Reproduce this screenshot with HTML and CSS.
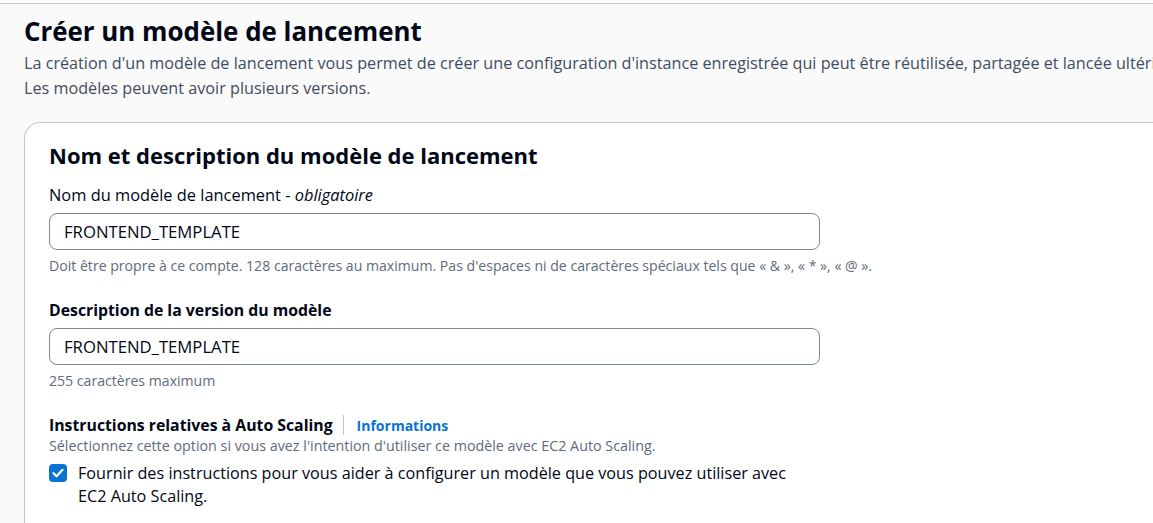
FILE: index.html
```html
<!DOCTYPE html>
<html lang="fr">
<head>
<meta charset="utf-8">
<link rel="stylesheet" href="styles.css">
</head>
<body>
<div class="page">
  <header class="page-header">
    <h1 class="title">Créer un modèle de lancement</h1>
    <p class="intro">La création d'un modèle de lancement vous permet de créer une configuration d'instance enregistrée qui peut être réutilisée, partagée et lancée ultérieurement.<br>Les modèles peuvent avoir plusieurs versions.</p>
  </header>
  <section class="container">
    <h2 class="section-title">Nom et description du modèle de lancement</h2>
    <div class="field field-name">
      <label class="label">Nom du modèle de lancement - <i>obligatoire</i></label>
      <div class="input">FRONTEND_TEMPLATE</div>
      <div class="hint">Doit être propre à ce compte. 128 caractères au maximum. Pas d'espaces ni de caractères spéciaux tels que « &amp; », « * », « @ ».</div>
    </div>
    <div class="field field-gap">
      <label class="label bold">Description de la version du modèle</label>
      <div class="input">FRONTEND_TEMPLATE</div>
      <div class="hint">255 caractères maximum</div>
    </div>
    <div class="field field-gap">
      <div class="label-row">
        <span class="label bold">Instructions relatives à Auto Scaling</span>
        <span class="sep"></span>
        <a class="info">Informations</a>
      </div>
      <div class="hint desc">Sélectionnez cette option si vous avez l'intention d'utiliser ce modèle avec EC2 Auto Scaling.</div>
      <div class="check-row">
        <span class="checkbox"><svg viewBox="0 0 18 18" width="18" height="18"><path d="M4.5 9.2 L7.6 12.2 L13.5 5.8" fill="none" stroke="#fff" stroke-width="2.2" stroke-linecap="round" stroke-linejoin="round"/></svg></span>
        <span class="check-text">Fournir des instructions pour vous aider à configurer un modèle que vous pouvez utiliser avec<br>EC2 Auto Scaling.</span>
      </div>
    </div>
  </section>
</div>
</body>
</html>
```
FILE: styles.css
```css
html, body {
  margin: 0;
  padding: 0;
}
body {
  background: #ffffff;
  font-family: "Open Sans", "Noto Sans", Arial, sans-serif;
  color: #000716;
  overflow: hidden;
  width: 1153px;
  height: 523px;
}
.page {
  margin-top: 3px;
  border-top: 1px solid #c6c6cd;
  background: #fafafa;
  padding: 0 0 0 24px;
  height: 519px;
  white-space: nowrap;
  overflow: hidden;
}
.page-header {
  padding-top: 9px;
}
.title {
  margin: 0;
  font-size: 25.9px;
  line-height: 36px;
  font-weight: 700;
  color: #000716;
}
.intro {
  margin: 2px 0 0;
  font-size: 16.2px;
  line-height: 25px;
  color: #414d5c;
}
.container {
  margin-top: 21px;
  background: #ffffff;
  border: 1px solid #c6c6cd;
  border-right: none;
  border-radius: 16px 0 0 0;
  padding: 17px 0 0 24px;
  height: 400px;
}
.section-title {
  margin: 0;
  font-size: 22px;
  line-height: 30px;
  font-weight: 700;
  color: #000716;
}
.field {
  width: 771px;
}
.field-name {
  margin-top: 14px;
}
.field-gap {
  margin-top: 23px;
}
.label {
  display: block;
  font-size: 16.4px;
  line-height: 22px;
  color: #000716;
}
.label.bold {
  font-weight: 700;
  font-size: 15.8px;
}
.label i {
  font-style: italic;
}
.input {
  margin-top: 7px;
  height: 35px;
  border: 1px solid #7d8998;
  border-radius: 8px;
  padding: 0 14px;
  font-size: 16.7px;
  line-height: 35px;
  color: #000716;
}
.hint {
  font-size: 14.1px;
  line-height: 20px;
  color: #5f6b7a;
  margin-top: 6px;
}
.label-row {
  display: flex;
  align-items: center;
}
.sep {
  width: 1px;
  height: 20px;
  background: #c6c6cd;
  margin: 0 13px 0 10px;
}
.info {
  font-size: 14px;
  font-weight: 700;
  color: #0972d3;
}
.hint.desc {
  margin-top: 0;
  font-size: 14.3px;
}
.check-row {
  display: flex;
  align-items: flex-start;
  margin-top: 6px;
}
.checkbox {
  width: 18px;
  height: 18px;
  border-radius: 4px;
  background: #0972d3;
  flex: none;
  margin-top: 2px;
  display: flex;
}
.check-text {
  margin-left: 11px;
  font-size: 16.2px;
  line-height: 23px;
  color: #000716;
}
```
